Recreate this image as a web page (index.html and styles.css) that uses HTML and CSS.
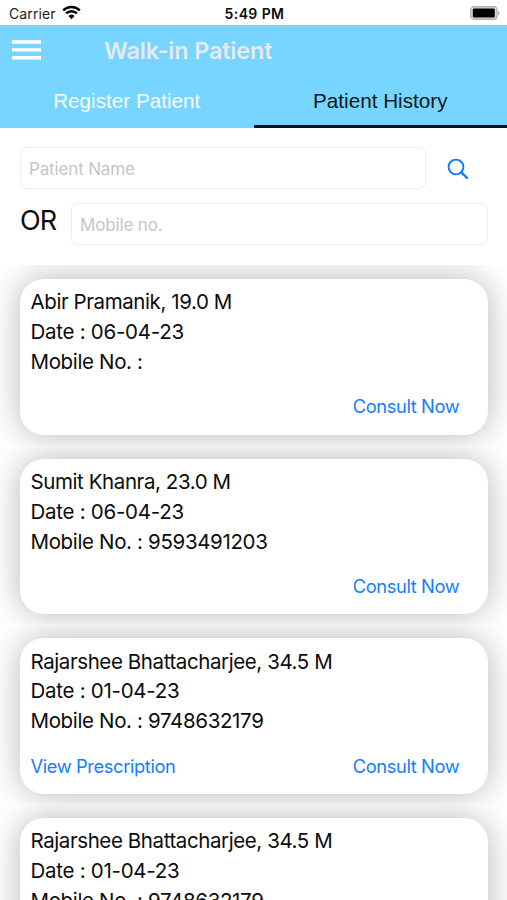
FILE: index.html
```html
<!DOCTYPE html>
<html lang="en">
<head>
<meta charset="utf-8">
<title>Walk-in Patient</title>
<link rel="stylesheet" href="styles.css">
</head>
<body>
<div class="status">
  <div class="carrier"><span>Carrier</span>
    <svg width="19" height="15" viewBox="0 0 19 15" fill="none" stroke="#000" stroke-width="2.5"><path d="M1.2 5.4a11.7 11.7 0 0 1 16.6 0M4.1 8.4a7.6 7.6 0 0 1 10.8 0"/><path d="M9.5 14.2 6.5 11a4.3 4.3 0 0 1 6 0z" fill="#000" stroke="none"/></svg>
  </div>
  <div class="clock">5:49 PM</div>
  <svg class="battery" width="30" height="14" viewBox="0 0 30 14"><rect x=".7" y=".7" width="26.2" height="12.6" rx="3.2" fill="#ddd" stroke="#b4b4b4" stroke-width="1.4"/><rect x="2.8" y="2.4" width="22" height="9.2" rx="1.4"/><path d="M28 4.5q1.6.8 1.6 2.5T28 9.5z" fill="#b4b4b4"/></svg>
</div>
<header>
  <div class="bar">
    <svg class="menu" width="29" height="20" viewBox="0 0 29 20" fill="#fff"><path d="M0 .3h29v3.4H0zM0 8.2h29v3.4H0zM0 16.1h29v3.4H0z"/></svg>
    <h1>Walk-in Patient</h1>
  </div>
  <nav><a class="tab">Register Patient</a><a class="tab active">Patient History</a></nav>
</header>
<form class="search">
  <div class="row">
    <div class="field name">Patient Name</div>
    <svg width="22" height="22" viewBox="0 0 22 22" fill="none" stroke="#0a7aff" stroke-width="1.9" stroke-linecap="round"><circle cx="9" cy="9" r="7.4"/><path d="m14.4 14.4 5.6 5.6" stroke-width="2.3"/></svg>
  </div>
  <div class="row second">
    <span class="or">OR</span>
    <div class="field mobile">Mobile no.</div>
  </div>
</form>
<main>
  <div class="cell"><article class="card"><p class="patient">Abir Pramanik, 19.0 M</p><p class="date">Date : 06-04-23</p><p>Mobile No. :</p><div class="actions"><a class="consult">Consult Now</a></div></article></div>
  <div class="cell"><article class="card"><p class="patient">Sumit Khanra, 23.0 M</p><p class="date">Date : 06-04-23</p><p>Mobile No. : 9593491203</p><div class="actions"><a class="consult">Consult Now</a></div></article></div>
  <div class="cell"><article class="card"><p class="patient">Rajarshee Bhattacharjee, 34.5 M</p><p class="date">Date : 01-04-23</p><p>Mobile No. : 9748632179</p><div class="actions"><a>View Prescription</a><a class="consult">Consult Now</a></div></article></div>
  <div class="cell"><article class="card"><p class="patient">Rajarshee Bhattacharjee, 34.5 M</p><p class="date">Date : 01-04-23</p><p>Mobile No. : 9748632179</p></article></div>
</main>
</body>
</html>
```
FILE: styles.css
```css
* { box-sizing: border-box; margin: 0; }
body { height: 900px; overflow: hidden; display: flex; flex-direction: column; background: #fff; color: #0c0c0c; font-family: Inter, sans-serif; }
.status { height: 25px; flex: none; display: grid; grid-template-columns: 1fr auto 1fr; align-items: center; padding: 2px 7px 0 9px; font-size: 14px; }
.carrier { display: flex; align-items: center; gap: 6px; color: #222; letter-spacing: .1px; }
.carrier svg { margin-top: -2px; }
.clock { font-weight: 600; font-size: 14px; letter-spacing: .4px; }
.battery { justify-self: end; margin-top: -1px; }
header { height: 103px; flex: none; background: #77d5ff; display: flex; flex-direction: column; }
.bar { height: 50px; display: flex; align-items: center; padding-left: 12px; }
.menu { margin-right: 63px; }
h1 { font-size: 23.3px; line-height: 28px; font-weight: 600; color: #e6eaf0; letter-spacing: -.1px; padding-top: 2px; }
nav { flex: 1; display: grid; grid-template-columns: 1fr 1fr; font: 20.7px/52px "Liberation Sans", sans-serif; text-align: center; }
.tab { color: #f8fcff; height: 53px; padding-top: 1px; line-height: 50px; }
.active { color: #101820; border-bottom: 3px solid #0b0d12; }
.search { height: 137px; flex: none; padding: 19px 19px 0 20px; }
.row { display: flex; align-items: center; }
.row svg { margin: 2px 0 0 20.5px; }
.second { margin-top: 14px; }
.field { height: 42px; border: 1.5px solid #eee; border-radius: 7px; padding: 1px 8px 0; font-size: 17px; line-height: 40px; color: #c6c6c8; letter-spacing: -.15px; }
.name { width: 406px; }
.mobile { flex: 1; }
.or { width: 51px; font-size: 27px; line-height: 32px; letter-spacing: -1px; margin-top: -6px; }
main { flex: 1; min-height: 0; overflow: hidden; }
.cell { height: 179.7px; padding: 14px 19px 0 20px; overflow: hidden; }
.card { height: 155.5px; border-radius: 24px; background: #fff; box-shadow: 0 0 34px rgba(0, 0, 0, .29); padding: 8.3px 28.7px 0 10.5px; }
p { font-size: 20.5px; line-height: 29.8px; white-space: nowrap; letter-spacing: -.35px; }
.patient { letter-spacing: -.41px; }
.date { letter-spacing: -.27px; }
.actions { display: flex; font-size: 18.3px; line-height: 24px; margin-top: 17.6px; color: #137eff; letter-spacing: -.38px; }
.consult { margin-left: auto; }
```
